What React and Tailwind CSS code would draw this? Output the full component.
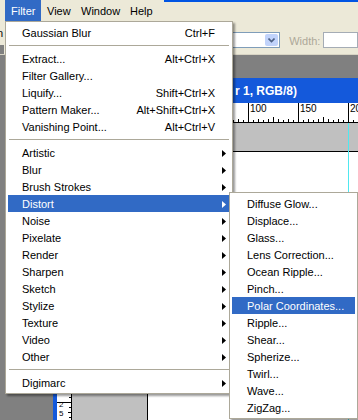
import React from 'react'

const mainGroups = [
  [{ label: 'Gaussian Blur', shortcut: 'Ctrl+F' }],
  [
    { label: 'Extract...', shortcut: 'Alt+Ctrl+X' },
    { label: 'Filter Gallery...' },
    { label: 'Liquify...', shortcut: 'Shift+Ctrl+X' },
    { label: 'Pattern Maker...', shortcut: 'Alt+Shift+Ctrl+X' },
    { label: 'Vanishing Point...', shortcut: 'Alt+Ctrl+V' },
  ],
  [
    { label: 'Artistic', arrow: true },
    { label: 'Blur', arrow: true },
    { label: 'Brush Strokes', arrow: true },
    { label: 'Distort', arrow: true, active: true },
    { label: 'Noise', arrow: true },
    { label: 'Pixelate', arrow: true },
    { label: 'Render', arrow: true },
    { label: 'Sharpen', arrow: true },
    { label: 'Sketch', arrow: true },
    { label: 'Stylize', arrow: true },
    { label: 'Texture', arrow: true },
    { label: 'Video', arrow: true },
    { label: 'Other', arrow: true },
  ],
  [{ label: 'Digimarc', arrow: true }],
]

const distortItems = [
  'Diffuse Glow...',
  'Displace...',
  'Glass...',
  'Lens Correction...',
  'Ocean Ripple...',
  'Pinch...',
  'Polar Coordinates...',
  'Ripple...',
  'Shear...',
  'Spherize...',
  'Twirl...',
  'Wave...',
  'ZigZag...',
]

function Tri({ white }) {
  return (
    <svg width="4" height="7" viewBox="0 0 4 7">
      <polygon points="0,0 4,3.5 0,7" fill={white ? '#fff' : '#000'} />
    </svg>
  )
}

function Item({ label, shortcut, arrow, active }) {
  return (
    <div
      className={`flex items-center h-[17px] pt-px pl-[14px] ${
        active ? 'bg-[#316AC5] text-white' : 'text-black'
      }`}
    >
      <span className="flex-1 whitespace-nowrap">{label}</span>
      {shortcut && <span className="whitespace-nowrap">{shortcut}</span>}
      <span className="w-[15px] flex items-center pl-[7px]">
        {arrow && <Tri white={active} />}
      </span>
    </div>
  )
}

function Separator() {
  return (
    <div className="h-[9px] flex items-center px-[1px]">
      <div className="h-px w-full bg-[#ACA899]" />
    </div>
  )
}

function HRuler() {
  const ticks = []
  for (let u = -75; u <= 220; u += 5) {
    const x = 76 + u + 0.5
    let h = 3
    if (u % 50 === 0) h = 20
    else if (u % 25 === 0) h = 6
    else if (u % 10 === 0) h = 4
    ticks.push(<line key={u} x1={x} x2={x} y1={20 - h} y2={20} stroke="#000" />)
  }
  return (
    <svg width="300" height="20" className="block">
      <rect width="300" height="20" fill="#fff" />
      {ticks}
      {[100, 150, 200].map((n) => (
        <text key={n} x={76 + n + 2} y={9} fontSize="10" fontFamily="Liberation Sans, sans-serif" fill="#000">
          {n}
        </text>
      ))}
      <line x1="0" x2="300" y1="19.5" y2="19.5" stroke="#000" />
    </svg>
  )
}

function VRuler() {
  const ticks = []
  for (let u = -25; u <= 270; u += 5) {
    const y = 29 + u + 0.5
    let w = 3
    if (u % 50 === 0) w = 15
    else if (u % 25 === 0) w = 6
    else if (u % 10 === 0) w = 4
    ticks.push(<line key={u} x1={15 - w} x2={15} y1={y} y2={y} stroke="#000" />)
  }
  return (
    <svg width="15" height="300" className="block">
      <rect width="15" height="300" fill="#fff" />
      {ticks}
      <text x="2" y="284" fontSize="8" fontFamily="Liberation Sans, sans-serif" fill="#000">
        2
      </text>
      <text x="2" y="293" fontSize="8" fontFamily="Liberation Sans, sans-serif" fill="#000">
        5
      </text>
      <line x1="14.5" x2="14.5" y1="0" y2="300" stroke="#000" />
    </svg>
  )
}

export default function App() {
  return (
    <div className="relative w-[358px] h-[420px] overflow-hidden bg-[#808080] font-['Liberation_Sans',Tahoma,sans-serif] text-[11px] flex flex-col">
      {/* menu bar */}
      <div className="h-[21px] bg-[#ECE9D8] flex items-stretch shrink-0">
        <div className="ml-[5px] w-[36px] pl-[6px] pt-px bg-[#316AC5] text-white flex items-center">Filter</div>
        <span className="w-[34px] pl-[6px] pt-px flex items-center">View</span>
        <span className="w-[49px] pl-[6px] pt-px flex items-center">Window</span>
        <span className="w-[40px] pl-[6px] pt-px flex items-center">Help</span>
        <div className="flex-1 border-t-2 border-[#0054E3]" />
      </div>

      {/* options toolbar */}
      <div className="h-[34px] bg-[#ECE9D8] flex items-start shrink-0 border-b border-[#D8D4C4]">
        <div className="w-[5px] h-full flex flex-col overflow-hidden">
          <div className="h-[24px] flex items-center -ml-[3px]">n</div>
          <div className="flex-1 bg-[#808080]" />
        </div>
        <div className="ml-[175px] mt-[11px] w-[117px] h-[16px] border border-[#7F9DB9] bg-white flex justify-end p-[1px]">
          <div className="w-[13px] h-full bg-[#C1D3FB] rounded-[2px] flex items-center justify-center">
            <svg width="7" height="5" viewBox="0 0 7 5">
              <polyline points="0.5,0.5 3.5,3.5 6.5,0.5" fill="none" stroke="#4D6185" strokeWidth="1.6" />
            </svg>
          </div>
        </div>
        <span className="ml-[9px] mt-[12px] text-[#ACA899]">Width:</span>
        <div className="ml-[3px] mt-[11px] w-[40px] h-[16px] border border-[#A5ACB5] bg-white" />
      </div>

      {/* workspace */}
      <div className="flex-1 pl-[53px] pt-[23px]">
        <div className="w-[360px] flex flex-col">
          <div className="h-[25px] bg-[#1459DB] flex items-center pl-[182px] text-white font-bold text-[12px]">
            <span className="whitespace-pre">r 1, RGB/8)</span>
          </div>
          <div className="flex">
            <div className="w-[4px] bg-[#1459DB]" />
            <div className="flex-1 grid grid-cols-[15px_1fr] grid-rows-[20px_300px]">
              <div className="bg-white border-r border-b border-black" />
              <div className="overflow-hidden">
                <HRuler />
              </div>
              <div className="overflow-hidden">
                <VRuler />
              </div>
              <div className="relative bg-[#C0C0C0] pl-[75px] pt-[28px] flex">
                <div className="flex-1 bg-white border-t border-l border-black" />
                <div className="absolute left-[276px] top-0 bottom-0 w-px bg-[#4FE8F0]" />
              </div>
            </div>
          </div>
        </div>
      </div>

      {/* Filter menu */}
      <div className="absolute left-[5px] top-[21px] w-[228px] bg-white border border-[#ACA899] p-[2px] shadow-[2px_2px_2px_rgba(0,0,0,0.4)]">
        {mainGroups.map((g, i) => (
          <React.Fragment key={i}>
            {i > 0 && <Separator />}
            {g.map((it) => (
              <Item key={it.label} {...it} />
            ))}
          </React.Fragment>
        ))}
      </div>

      {/* Distort submenu */}
      <div className="absolute left-[229px] top-[192px] w-[129px] bg-white border border-[#ACA899] p-[2px] shadow-[2px_2px_2px_rgba(0,0,0,0.4)]">
        {distortItems.map((label) => {
          const active = label === 'Polar Coordinates...'
          return (
            <div
              key={label}
              className={`h-[17px] pt-px pl-[15px] flex items-center whitespace-nowrap ${
                active ? 'bg-[#316AC5] text-white' : 'text-black'
              }`}
            >
              {label}
            </div>
          )
        })}
      </div>
    </div>
  )
}
